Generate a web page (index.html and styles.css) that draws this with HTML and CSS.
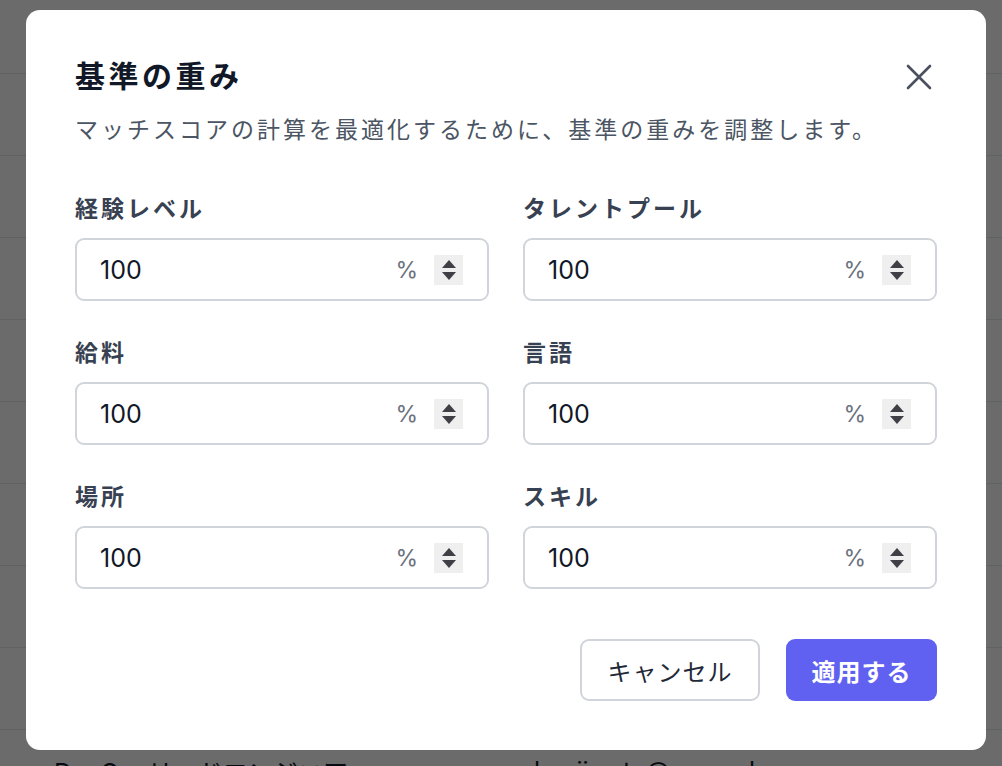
FILE: index.html
```html
<!DOCTYPE html>
<html lang="ja">
<head>
    <meta charset="UTF-8">
    <meta name="viewport" content="width=device-width, initial-scale=1.0">
    <title>基準の重み</title>
    <link rel="stylesheet" href="styles.css">
</head>
<body>

    <!-- Candidate table behind the dialog -->
    <section class="candidate-table">
        <div class="table-row table-head"></div>
        <div class="table-row"></div>
        <div class="table-row"></div>
        <div class="table-row"></div>
        <div class="table-row"></div>
        <div class="table-row"></div>
        <div class="table-row"></div>
        <div class="table-row"></div>
        <div class="table-row"></div>
        <div class="table-row">
            <span class="cell cell-title">DevOpsリードエンジニア</span>
            <span class="cell cell-mail">kenji.sato@example.com</span>
        </div>
    </section>

    <!-- Weights dialog -->
    <div class="overlay">
        <div class="modal">
            <div class="modal-head">
                <h2 class="modal-title">基準の重み</h2>
                <button class="close-btn" aria-label="閉じる">
                    <svg width="26" height="26" viewBox="0 0 26 26" fill="none" stroke="currentColor" stroke-width="2.6" stroke-linecap="round">
                        <path d="M2 2L24 24M24 2L2 24"/>
                    </svg>
                </button>
            </div>
            <p class="modal-desc">マッチスコアの計算を最適化するために、基準の重みを調整します。</p>

            <div class="weight-grid">
                <div class="field">
                    <label class="field-label">経験レベル</label>
                    <div class="number-input">
                        <span class="value">100</span>
                        <span class="unit">%</span>
                        <span class="spinner"><i class="up"></i><i class="down"></i></span>
                    </div>
                </div>
                <div class="field">
                    <label class="field-label">タレントプール</label>
                    <div class="number-input">
                        <span class="value">100</span>
                        <span class="unit">%</span>
                        <span class="spinner"><i class="up"></i><i class="down"></i></span>
                    </div>
                </div>
                <div class="field">
                    <label class="field-label">給料</label>
                    <div class="number-input">
                        <span class="value">100</span>
                        <span class="unit">%</span>
                        <span class="spinner"><i class="up"></i><i class="down"></i></span>
                    </div>
                </div>
                <div class="field">
                    <label class="field-label">言語</label>
                    <div class="number-input">
                        <span class="value">100</span>
                        <span class="unit">%</span>
                        <span class="spinner"><i class="up"></i><i class="down"></i></span>
                    </div>
                </div>
                <div class="field">
                    <label class="field-label">場所</label>
                    <div class="number-input">
                        <span class="value">100</span>
                        <span class="unit">%</span>
                        <span class="spinner"><i class="up"></i><i class="down"></i></span>
                    </div>
                </div>
                <div class="field">
                    <label class="field-label">スキル</label>
                    <div class="number-input">
                        <span class="value">100</span>
                        <span class="unit">%</span>
                        <span class="spinner"><i class="up"></i><i class="down"></i></span>
                    </div>
                </div>
            </div>

            <div class="modal-actions">
                <button class="btn btn-cancel">キャンセル</button>
                <button class="btn btn-apply">適用する</button>
            </div>
        </div>
    </div>

</body>
</html>
```

FILE: styles.css
```css
/* Base */
body {
    margin: 0;
    background: #ffffff;
    font-family: Inter, "Noto Sans CJK JP", sans-serif;
    color: #111827;
}

/* Table that sits behind the dialog */
.candidate-table {
    display: flex;
    flex-direction: column;
}

.table-row {
    height: 81px;
    border-bottom: 1px solid #e5e7eb;
    display: flex;
    align-items: center;
    font-size: 25px;
    flex-shrink: 0;
}

.table-head {
    height: 73px;
}

.cell-title {
    padding-left: 54px;
    width: 480px;
}

/* Dimmed backdrop */
.overlay {
    position: fixed;
    inset: 0;
    background: rgba(0, 0, 0, 0.58);
    display: flex;
    align-items: flex-start;
    padding: 10px 16px 16px 26px;
}

.modal {
    box-sizing: border-box;
    width: 960px;
    height: 740px;
    background: #ffffff;
    border-radius: 14px;
    padding: 48px 49px 49px;
    display: flex;
    flex-direction: column;
}

.modal-head {
    display: flex;
    justify-content: space-between;
    align-items: flex-start;
}

.modal-title {
    margin: 0;
    font-size: 30px;
    line-height: 36px;
    font-weight: 700;
    letter-spacing: 3.5px;
    color: #111827;
}

.close-btn {
    border: 0;
    background: none;
    padding: 0;
    color: #4b5060;
    display: flex;
    margin: 6px 5px 0 0;
}

.modal-desc {
    margin: 21px 0 0;
    font-size: 23px;
    line-height: 30px;
    letter-spacing: 3px;
    color: #4b5563;
}

/* Weight inputs */
.weight-grid {
    display: grid;
    grid-template-columns: 1fr 1fr;
    column-gap: 34px;
    row-gap: 37px;
    margin-top: 49px;
}

.field {
    display: flex;
    flex-direction: column;
    gap: 14px;
}

.field-label {
    font-size: 23px;
    line-height: 30px;
    font-weight: 600;
    letter-spacing: 3px;
    color: #374151;
}

.number-input {
    box-sizing: border-box;
    height: 63px;
    border: 2px solid #d1d5db;
    border-radius: 9px;
    display: flex;
    align-items: center;
    padding: 0 24px 0 23px;
}

.value {
    flex: 1;
    font-size: 25px;
    color: #111827;
}

.unit {
    font-size: 23px;
    color: #6b7280;
    margin-right: 16px;
}

.spinner {
    width: 29px;
    height: 30px;
    background: #efefef;
    display: flex;
    flex-direction: column;
    align-items: center;
    justify-content: center;
    gap: 4px;
}

.spinner i {
    width: 0;
    height: 0;
    border-left: 7px solid transparent;
    border-right: 7px solid transparent;
}

.spinner .up {
    border-bottom: 8px solid #3f3f46;
}

.spinner .down {
    border-top: 8px solid #3f3f46;
}

/* Footer buttons */
.modal-actions {
    margin-top: auto;
    display: flex;
    justify-content: flex-end;
    gap: 26px;
}

.btn {
    box-sizing: border-box;
    height: 62px;
    border-radius: 9px;
    font-family: inherit;
    font-size: 24px;
    letter-spacing: 1px;
    cursor: pointer;
}

.btn-cancel {
    width: 180px;
    background: #ffffff;
    border: 2px solid #d1d5db;
    color: #1f2937;
}

.btn-apply {
    width: 151px;
    background: #6061f0;
    border: 0;
    color: #ffffff;
    font-weight: 700;
}
```
